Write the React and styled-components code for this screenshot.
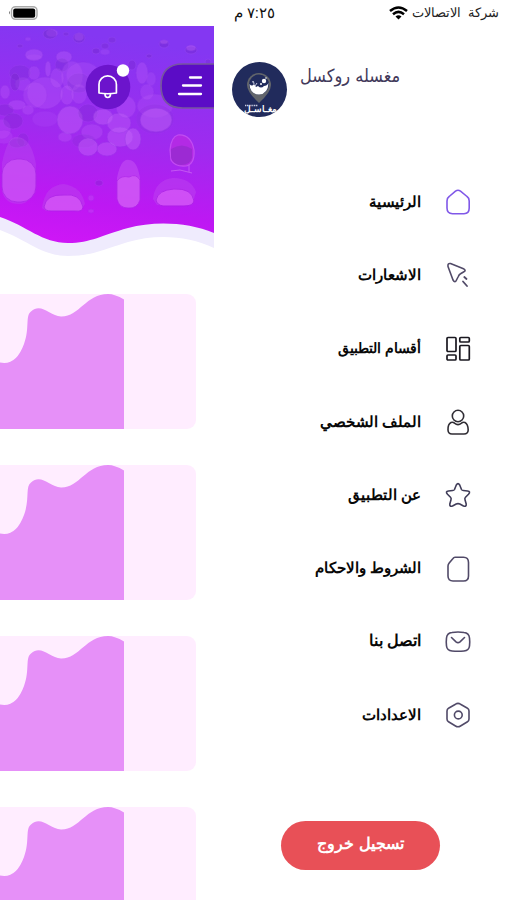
import React from 'react';
import styled, { createGlobalStyle } from 'styled-components';

const GlobalStyle = createGlobalStyle`
  * { box-sizing: border-box; }
  body { margin: 0; background: #fff; font-family: "Liberation Sans", sans-serif; }
`;
const Screen = styled.div`
  width: 507px; height: 900px; overflow: hidden; background: #fff;
  display: flex; flex-direction: column;
`;
const StatusBar = styled.header`
  height: 26px; flex: none; display: flex; align-items: center; padding: 0 8px 0 8px;
`;
const Clock = styled.span`
  width: 43px; margin-left: 192px; direction: rtl; text-align: right;
  font-size: 15px; line-height: 26px; color: #111; white-space: nowrap;
`;
const Carrier = styled.div`
  margin-left: auto; display: flex; align-items: center; gap: 4px;
  direction: ltr; font-size: 13px; line-height: 26px; color: #222; white-space: nowrap;
  word-spacing: 3px; padding-bottom: 0;
`;
const Body = styled.div`
  flex: 1; min-height: 0; display: grid; grid-template-columns: 214px 1fr;
`;
const HomePane = styled.main`overflow: hidden;`;
const Hero = styled.svg`display: block; width: 214px; height: 268px;`;
const CardList = styled.div`display: flex; flex-direction: column; gap: 36px;`;
const Card = styled.div`
  width: 195.5px; height: 135px; flex: none; overflow: hidden;
  border-radius: 0 9px 9px 0; background: #ffedff;
`;
const CardWave = styled.svg`display: block; width: 124px; height: 135px; fill: #e690f8;`;
const Drawer = styled.aside`display: flex; flex-direction: column;`;
const Profile = styled.div`
  height: 139.5px; display: flex; align-items: flex-start; gap: 12px; padding: 36px 0 0 18px;
`;
const Avatar = styled.svg`width: 56px; height: 56px; flex: none;`;
const ProfileName = styled.h1`
  margin: 0; font-family: "DejaVu Sans Condensed", "DejaVu Sans", sans-serif;
  font-size: 18px; font-weight: 400; line-height: 28px; color: #42395a; direction: rtl;
`;
const Menu = styled.nav`display: flex; flex-direction: column;`;
const MenuItem = styled.a`
  height: 73.3px; display: flex; direction: rtl; align-items: center; gap: 25px; padding-right: 37px;
  color: ${p => p.$color || '#514a68'};
  svg { width: 24px; height: 26px; flex: none; overflow: visible; fill: none; stroke: currentColor; stroke-width: 1.6; stroke-linecap: round; stroke-linejoin: round; }
`;
const MenuLabel = styled.span`
  font-size: ${p => p.$size || 15}px; font-weight: 700; line-height: 24px; color: #080808; white-space: nowrap;
  word-spacing: ${p => p.$gap || 0}px; padding-bottom: 1px;
`;
const Logout = styled.button`
  width: 159px; height: 49px; margin: 69px 0 0 67px; border: 0; border-radius: 25px;
  background: #e85057; color: #fff; font: 700 16px/24px "Liberation Sans", sans-serif;
  direction: rtl; padding: 0 0 3px;
`;

// cx, cy, rx, ry, tint, opacity
const bubbles = [
  [50,34,7,5,'d',.35],[52,33,6,4,'l',.2],[79,38,6,5,'d',.3],[79,37,5,4,'l',.25],[66,34,3,2,'d',.25],
  [28,39,3,2,'l',.2],[20,46,3,2,'d',.25],[34,55,9,6,'l',.3],[34,57,8,3,'l',.15],[64,57,8,6,'l',.3],[62,65,7,7,'d',.22],
  [96,51,4,3,'d',.3],[105,46,4,3,'d',.25],[112,40,4,3,'d',.25],[105,52,5,3,'l',.18],[164,44,5,4,'d',.3],[164,42,4,2,'l',.35],
  [191,50,6,4,'d',.3],[191,48,5,3,'l',.35],[208,62,3,3,'d',.25],[149,56,3,2,'d',.3],[132,65,4,5,'d',.28],
  [20,73,11,8,'d',.2],[34,73,6,7,'l',.22],[48,69,3,8,'l',.3],[23,84,8,7,'l',.18],[5,92,5,7,'l',.25],[15,82,5,9,'d',.28],
  [45,93,18,16,'l',.24],[35,95,12,13,'l',.2],[72,76,11,15,'l',.22],[79,83,12,10,'d',.2],[67,95,7,10,'l',.26],
  [79,94,8,10,'l',.22],[57,78,7,10,'l',.22],[83,75,17,13,'l',.2],[17,105,9,5,'l',.28],[5,110,9,6,'d',.22],[2,129,9,10,'l',.2],
  [13,121,10,8,'d',.24],[28,110,6,5,'l',.24],[45,119,13,8,'l',.12],[70,120,13,14,'l',.4],[88,113,10,9,'d',.22],
  [92,132,11,8,'l',.24],[103,117,10,8,'l',.38],[84,141,12,7,'d',.15],[65,137,7,5,'l',.25],[88,147,10,9,'l',.42],
  [107,149,10,7,'l',.4],[120,137,13,10,'l',.36],[133,139,8,11,'l',.42],[119,123,12,10,'l',.34],[126,107,10,11,'l',.26],
  [142,73,6,11,'l',.26],[151,79,5,7,'l',.18],[155,106,18,12,'l',.2],[155,119,19,15,'d',.1],[156,120,16,12,'l',.42],
  [4,137,9,7,'l',.18],[17,143,8,5,'d',.25],[23,140,6,7,'d',.2],[99,183,4,3,'d',.28],[91,198,3,3,'l',.25],[91,211,3,2,'l',.25],
  [119,94,6,8,'d',.15],[147,92,7,8,'l',.2],[170,88,10,7,'l',.1]
];

const HeroArt = () => (
  <Hero viewBox="0 26 214 268">
    <defs>
      <linearGradient id="sky" x1="0.15" y1="0" x2="0" y2="1">
        <stop offset="0" stopColor="#8437f2" /><stop offset=".45" stopColor="#a02aef" />
        <stop offset=".75" stopColor="#bd18f3" /><stop offset="1" stopColor="#d316f7" />
      </linearGradient>
      <filter id="soft" x="-10%" y="-10%" width="120%" height="120%"><feGaussianBlur stdDeviation=".7" /></filter>
      <clipPath id="waveClip"><path d="M0 26H214V233C188 222 154 221 128 228S91 243 68 243C42 243 27 226 0 217Z" /></clipPath>
    </defs>
    <path d="M0 26H214V248C188 235 154 234 128 242S91 256 68 256C42 256 27 240 0 230Z" fill="#efebfd" />
    <g clipPath="url(#waveClip)">
      <path d="M0 26H214V245H0Z" fill="url(#sky)" />
      <g filter="url(#soft)">
        {bubbles.map(([cx, cy, rx, ry, tint, o], i) => (
          <ellipse key={i} cx={cx} cy={cy} rx={rx} ry={ry} fill={tint === 'd' ? '#6b27bd' : '#c76afa'} opacity={o}
            stroke={tint === 'd' ? '#a755ef' : '#9540e4'} strokeWidth=".7" />
        ))}
        <path d="M2 163Q8 135 17 137Q31 137 36 164L35 187Q31 204 19 204Q5 204 2 191Z" fill="#bb53ee" opacity=".35" />
        <rect x="2" y="159" width="34" height="43" rx="15" fill="#cf5cf6" opacity=".6" stroke="#a92de6" />
        <path d="M42 208Q45 185 64 184Q82 187 85 204L80 211H46Z" fill="#bc42ee" opacity=".5" />
        <path d="M44 207Q46 194 64 195Q80 193 83 207Q83 212 75 211H51Q45 211 44 207Z" fill="#d960f7" opacity=".65" stroke="#ab25e5" />
        <path d="M117 178Q121 158 129 160Q137 160 140 178V200Q137 209 128 208Q119 208 117 199Z" fill="#ca5af5" opacity=".45" />
        <path d="M117 181Q121 175 129 177Q136 173 140 180V200Q137 209 128 208Q119 208 117 199Z" fill="#d760f7" opacity=".6" stroke="#ae28e7" />
        <path d="M153 199Q155 180 173 178Q191 178 196 192L192 205H157Z" fill="#bd43ef" opacity=".5" />
        <path d="M156 200Q158 190 174 189Q192 188 194 201Q193 206 184 206H163Q157 205 156 200Z" fill="#da60f8" opacity=".65" stroke="#a923e4" />
        <path d="M170 150Q171 137 178 135Q191 134 194 150Q195 164 186 166Q175 167 171 160Z" fill="#b32ce5" stroke="#c24cf2" strokeWidth="1.200" />
        <path d="M171 149Q182 142 192 149V158Q190 165 181 165Q174 165 171 158Z" fill="#9128c9" opacity=".65" />
        <path d="M171 171L180 170L192 173M189 165V172" fill="none" stroke="#c357f2" />
      </g>
    </g>
    <circle cx="108" cy="87" r="22.3" fill="#6c14cc" />
    <g fill="none" stroke="#fff" strokeWidth="1.7" strokeLinejoin="round">
      <path d="M99 93V84.500A8.700 8.700 0 0 1 116.400 84.500V93Q107.700 94.500 99 93Z" /><path d="M105 94Q105 97.500 107.700 97.500T110.500 94" />
    </g>
    <circle cx="123" cy="70.500" r="6.200" fill="#fff" />
    <path d="M214 64H183Q161 64 161 86Q161 108 183 108H214" fill="#5b0cc6" stroke="#76559f" strokeWidth="1.700" />
    <path d="M190 77.500H201M183 85.500H201M179 94H201" stroke="#fff" strokeWidth="2.300" strokeLinecap="round" />
  </Hero>
);

const Battery = () => (
  <svg width="32" height="16" viewBox="0 0 32 16">
    <path d="M2 6Q0 7.500 2 9.500Z" fill="#777" />
    <rect x="3.500" y="1.700" width="25.500" height="12.600" rx="4" fill="#fff" stroke="#aaa" strokeWidth="1.500" />
    <rect x="5.200" y="3.500" width="22" height="9.200" rx="2" fill="#000" />
  </svg>
);
const Wifi = () => (
  <svg width="19" height="14" viewBox="0 0 19 14" fill="none" stroke="#000" strokeWidth="2.500">
    <path d="M1 5Q9.500-2 18 5M4 8.200Q9.500 3.500 15 8.200" /><path d="M6.500 10.500Q9.500 8 12.500 10.500L9.500 13.500Z" fill="#000" stroke="none" />
  </svg>
);
const Logo = () => (
  <Avatar viewBox="0 0 56 56">
    <defs><clipPath id="logoClip"><circle cx="27.500" cy="27.500" r="27.500" /></clipPath></defs>
    <circle cx="27.500" cy="27.500" r="27.500" fill="#212b5c" />
    <g clipPath="url(#logoClip)">
      <path d="M27 41Q15 30 15 23A12 12 0 0 1 39 23Q39 30 27 41Z" fill="#62656b" />
      <circle cx="27" cy="22.500" r="10" fill="#212b5c" />
      <path d="M17.500 22Q20 25 22 22L24 25L26 24Q29 27 32 24Q35 24 36.500 21Q36 32 27 32.500Q18 32 17.500 22Z" fill="#fff" />
      <path d="M20 20Q22 18 22 22M23 24L25 21" stroke="#c9cce1" fill="none" />
      <circle cx="32" cy="19" r="2.200" fill="#fff" /><circle cx="29" cy="22" r="1" fill="#fff" /><circle cx="34" cy="16" r=".8" fill="#fff" />
      <text x="28" y="49.500" fill="#fff" fontSize="8.800" fontWeight="700" textAnchor="middle">مغـاسـل</text>
      <path d="M13 43.500H26" stroke="#c9cce1" strokeWidth="1.300" strokeDasharray="1.200 .6" />
    </g>
  </Avatar>
);

const items = [
  { label: 'الرئيسية', color: '#8058e8', icon: <path d="M9.500 2.200Q12 .2 14.500 2.200L21 7.500Q23.200 9 23.200 12V19Q23.200 24.700 18 24.700H6.500Q1 24.700 1 19V12Q1 9 3.200 7.500Z" /> },
  { label: 'الاشعارات', icon: <><path d="M4.500 1.500L17.500 6.700Q20.700 8.500 17.500 10L14.500 11.700Q13 12.500 12.300 14.500L10.500 18Q9 21.500 7 18L2 4.500Q1.500 1 4.500 1.500Z" /><path d="M17 19.500L21 24M18.300 15L20.500 17" strokeWidth="1.800" /></> },
  { label: 'أقسام التطبيق', size: 14.3, color: '#1a1820', icon: <g strokeLinejoin="miter" strokeWidth="1.700"><rect x="1" y="1.500" width="9" height="14" rx="1" /><rect x="13.800" y="1.500" width="9.500" height="4.500" rx="1" /><rect x="13.800" y="9.500" width="9.500" height="14.500" rx="1" /><rect x="1" y="19" width="9" height="5" rx="1" /></g> },
  { label: 'الملف الشخصي', color: '#302d34', icon: <><circle cx="12" cy="7" r="5.700" /><path d="M5 13.500Q1.800 15 2 21Q2.200 25 6 25H18Q22 25 22.200 21Q22 15 19 13.500Q17 12.800 15.500 14.200Q12 17 8.500 14.200Q7 12.800 5 13.500Z" /></> },
  { label: 'عن التطبيق', color: '#403d59', icon: <path d="M10.300 3Q12 .2 13.700 3L15.500 7.500Q16 8.500 17.300 8.500L21.500 9Q25 9.500 22.500 12.300L19.500 15.300Q18.500 16.300 19 17.800L20.200 22Q20.500 25 17.500 24L13.800 22Q12 21.300 10.200 22L6.500 24Q3.500 25 3.800 22L5 17.800Q5.500 16.300 4.500 15.300L1.500 12.300Q-1 9.500 2.500 9L6.700 8.500Q8 8.500 8.500 7.500Z" /> },
  { label: 'الشروط والاحكام', icon: <path d="M9 1.300H17.500Q22.500 1.300 22.500 6.500V20Q22.500 25 17.500 25H7Q2 25 2 20V10Q2 8.500 3.200 7L7 2.500Q7.800 1.300 9 1.300Z" /> },
  { label: 'اتصل بنا', size: 16, icon: <><path d="M6 3.500Q12 2.500 18 3.500Q23 4 23.500 9Q24 13 23.500 17Q23 21.500 18 22Q12 22.600 6 22Q1 21.500.5 17Q0 13 .5 9Q1 4 6 3.500Z" /><path d="M5.500 8.500L10 12.800Q12 14.500 14 12.800L18.500 8.500" /></> },
  { label: 'الاعدادات', icon: <><path d="M9.500 2.200Q12 .5 14.500 2.200L21.500 6.200Q23 7 23 9V17Q23 19 21.500 19.800L14.500 24Q12 25.500 9.500 24L2.500 19.800Q1 19 1 17V9Q1 7 2.500 6.200Z" /><circle cx="12.300" cy="13" r="3.900" /></> },
];

export default function App() {
  return (
    <>
      <GlobalStyle />
      <Screen>
        <StatusBar>
          <Battery />
          <Clock>٧:٢٥ م</Clock>
          <Carrier><Wifi /><span>شركة الاتصالات</span></Carrier>
        </StatusBar>
        <Body>
          <HomePane>
            <HeroArt />
            <CardList>
              {[0, 1, 2, 3].map(i => (
                <Card key={i}>
                  <CardWave viewBox="0 0 124 135">
                    <path d="M0 68.500Q16 72 24 50C30 34 25 22 31 17.500C41 8 50 22 61 22.500C79 23 86 0 108 0Q115 0 124 5.500V135H0Z" />
                  </CardWave>
                </Card>
              ))}
            </CardList>
          </HomePane>
          <Drawer>
            <Profile><Logo /><ProfileName>مغسله روكسل</ProfileName></Profile>
            <Menu>
              {items.map(it => (
                <MenuItem key={it.label} $color={it.color}>
                  <svg viewBox="0 0 24 26">{it.icon}</svg>
                  <MenuLabel $size={it.size} $gap={it.gap}>{it.label}</MenuLabel>
                </MenuItem>
              ))}
            </Menu>
            <Logout>تسجيل خروج</Logout>
          </Drawer>
        </Body>
      </Screen>
    </>
  );
}
